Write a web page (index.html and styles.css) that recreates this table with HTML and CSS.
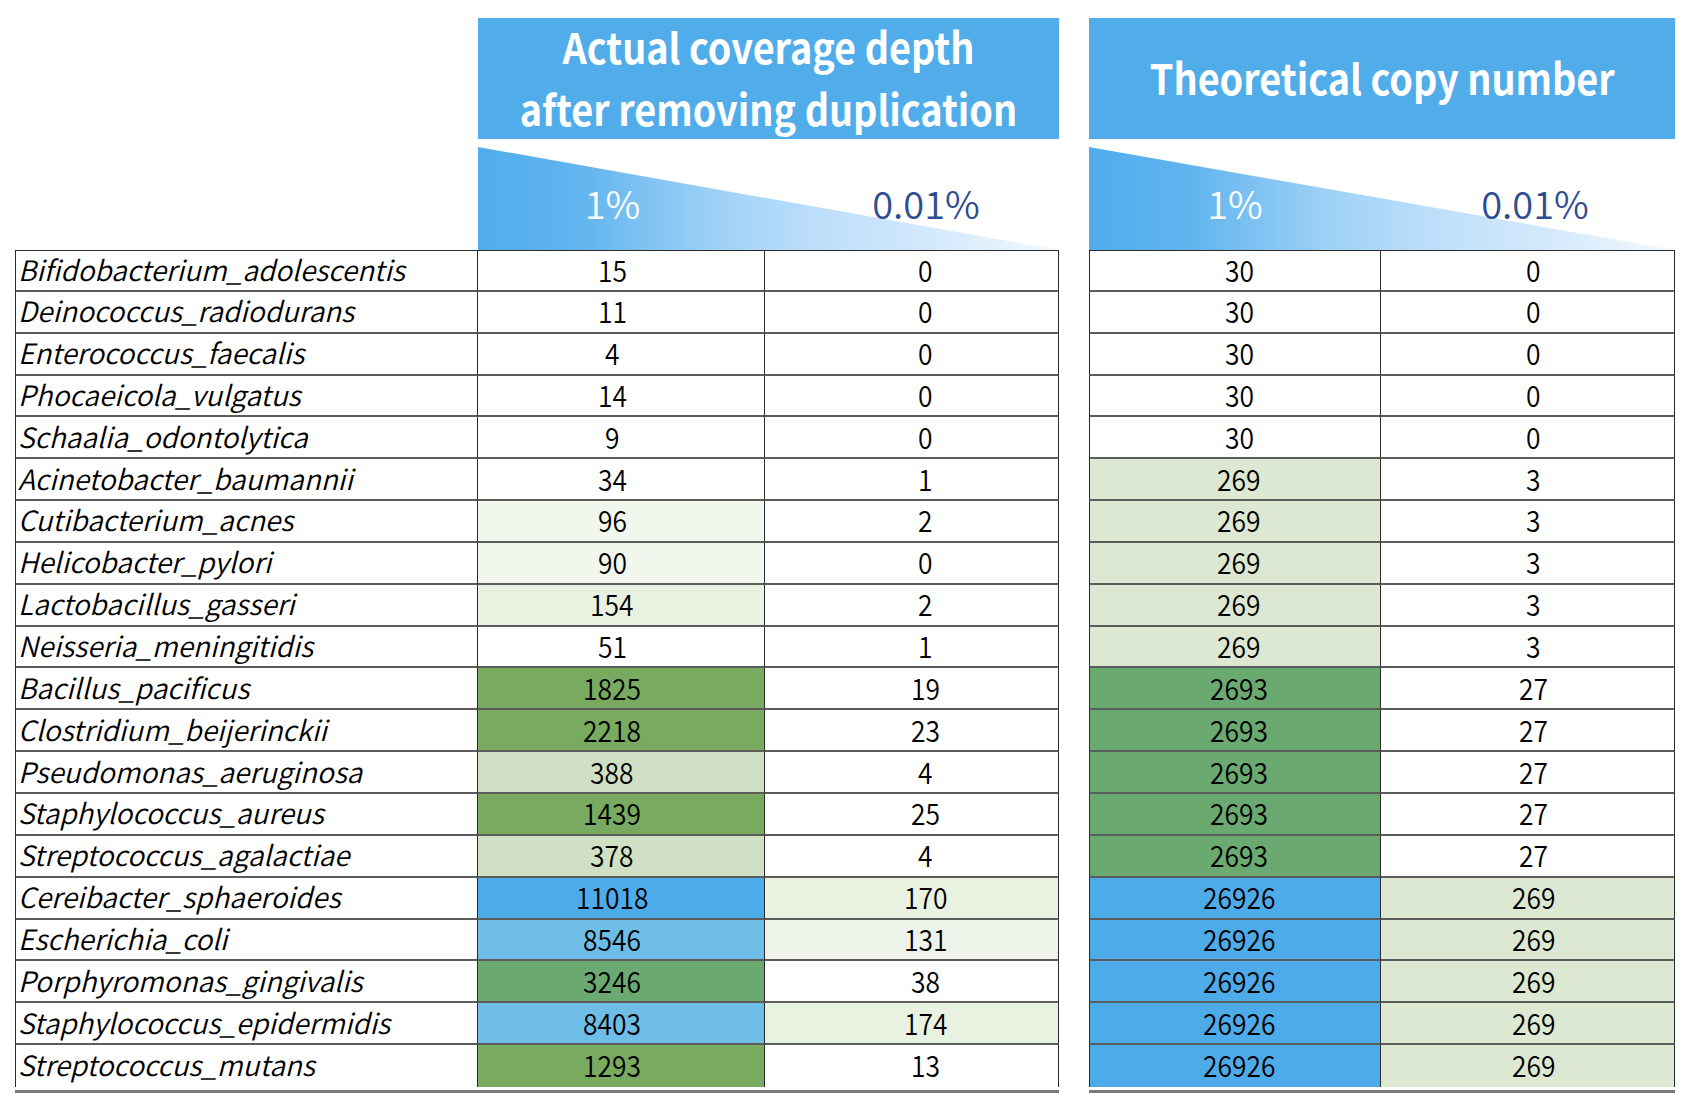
FILE: index.html
```html
<!DOCTYPE html>
<html>
<head>
<meta charset="utf-8">
<link rel="stylesheet" href="styles.css">
</head>
<body>
<div class="sheet">
  <div class="tbl tbl-left">
    <div class="head"><span class="ht">Actual coverage depth<br>after removing duplication</span></div>
    <div class="sub"><span class="p1">1%</span><span class="p2">0.01%</span></div>
    <div class="body">
      <div class="c name first top">Bifidobacterium_adolescentis</div><div class="c v1 top"><span>15</span></div><div class="c v2 top"><span>0</span></div>
      <div class="c name first">Deinococcus_radiodurans</div><div class="c v1"><span>11</span></div><div class="c v2"><span>0</span></div>
      <div class="c name first">Enterococcus_faecalis</div><div class="c v1"><span>4</span></div><div class="c v2"><span>0</span></div>
      <div class="c name first">Phocaeicola_vulgatus</div><div class="c v1"><span>14</span></div><div class="c v2"><span>0</span></div>
      <div class="c name first">Schaalia_odontolytica</div><div class="c v1"><span>9</span></div><div class="c v2"><span>0</span></div>
      <div class="c name first">Acinetobacter_baumannii</div><div class="c v1"><span>34</span></div><div class="c v2"><span>1</span></div>
      <div class="c name first">Cutibacterium_acnes</div><div class="c v1 g0"><span>96</span></div><div class="c v2"><span>2</span></div>
      <div class="c name first">Helicobacter_pylori</div><div class="c v1 g0"><span>90</span></div><div class="c v2"><span>0</span></div>
      <div class="c name first">Lactobacillus_gasseri</div><div class="c v1 g1"><span>154</span></div><div class="c v2"><span>2</span></div>
      <div class="c name first">Neisseria_meningitidis</div><div class="c v1"><span>51</span></div><div class="c v2"><span>1</span></div>
      <div class="c name first">Bacillus_pacificus</div><div class="c v1 gd"><span>1825</span></div><div class="c v2"><span>19</span></div>
      <div class="c name first">Clostridium_beijerinckii</div><div class="c v1 gd"><span>2218</span></div><div class="c v2"><span>23</span></div>
      <div class="c name first">Pseudomonas_aeruginosa</div><div class="c v1 g3"><span>388</span></div><div class="c v2"><span>4</span></div>
      <div class="c name first">Staphylococcus_aureus</div><div class="c v1 gd"><span>1439</span></div><div class="c v2"><span>25</span></div>
      <div class="c name first">Streptococcus_agalactiae</div><div class="c v1 g3"><span>378</span></div><div class="c v2"><span>4</span></div>
      <div class="c name first">Cereibacter_sphaeroides</div><div class="c v1 bl"><span>11018</span></div><div class="c v2 g1"><span>170</span></div>
      <div class="c name first">Escherichia_coli</div><div class="c v1 lb"><span>8546</span></div><div class="c v2 g0b"><span>131</span></div>
      <div class="c name first">Porphyromonas_gingivalis</div><div class="c v1 gm"><span>3246</span></div><div class="c v2"><span>38</span></div>
      <div class="c name first">Staphylococcus_epidermidis</div><div class="c v1 lb"><span>8403</span></div><div class="c v2 g1"><span>174</span></div>
      <div class="c name first last">Streptococcus_mutans</div><div class="c v1 gd last"><span>1293</span></div><div class="c v2 last"><span>13</span></div>
    </div>
    <div class="foot"></div>
  </div>

  <div class="tbl tbl-right">
    <div class="head"><span class="ht">Theoretical copy number</span></div>
    <div class="sub"><span class="p1">1%</span><span class="p2">0.01%</span></div>
    <div class="body">
      <div class="c v3 first top"><span>30</span></div><div class="c v4 top"><span>0</span></div>
      <div class="c v3 first"><span>30</span></div><div class="c v4"><span>0</span></div>
      <div class="c v3 first"><span>30</span></div><div class="c v4"><span>0</span></div>
      <div class="c v3 first"><span>30</span></div><div class="c v4"><span>0</span></div>
      <div class="c v3 first"><span>30</span></div><div class="c v4"><span>0</span></div>
      <div class="c v3 first g2"><span>269</span></div><div class="c v4"><span>3</span></div>
      <div class="c v3 first g2"><span>269</span></div><div class="c v4"><span>3</span></div>
      <div class="c v3 first g2"><span>269</span></div><div class="c v4"><span>3</span></div>
      <div class="c v3 first g2"><span>269</span></div><div class="c v4"><span>3</span></div>
      <div class="c v3 first g2"><span>269</span></div><div class="c v4"><span>3</span></div>
      <div class="c v3 first gm"><span>2693</span></div><div class="c v4"><span>27</span></div>
      <div class="c v3 first gm"><span>2693</span></div><div class="c v4"><span>27</span></div>
      <div class="c v3 first gm"><span>2693</span></div><div class="c v4"><span>27</span></div>
      <div class="c v3 first gm"><span>2693</span></div><div class="c v4"><span>27</span></div>
      <div class="c v3 first gm"><span>2693</span></div><div class="c v4"><span>27</span></div>
      <div class="c v3 first bl"><span>26926</span></div><div class="c v4 g2"><span>269</span></div>
      <div class="c v3 first bl"><span>26926</span></div><div class="c v4 g2"><span>269</span></div>
      <div class="c v3 first bl"><span>26926</span></div><div class="c v4 g2"><span>269</span></div>
      <div class="c v3 first bl"><span>26926</span></div><div class="c v4 g2"><span>269</span></div>
      <div class="c v3 first bl last"><span>26926</span></div><div class="c v4 g2 last"><span>269</span></div>
    </div>
    <div class="foot"></div>
  </div>
</div>
</body>
</html>
```
FILE: styles.css
```css
html, body {
  margin: 0;
  padding: 0;
  background: #ffffff;
}
body {
  font-family: "Noto Sans CJK SC", "Noto Sans", sans-serif;
  color: #000;
}
.sheet {
  display: flex;
  gap: 30px;
  padding: 18px 0 0 15px;
}
.tbl {
  display: flex;
  flex-direction: column;
}
.body {
  display: grid;
  grid-auto-rows: 41.85px;
}
.tbl-left .body {
  grid-template-columns: 463px 287px 294px;
}
.tbl-right .body {
  grid-template-columns: 292px 294px;
}
.tbl-left .head,
.tbl-left .sub {
  margin-left: 463px;
}

.head {
  box-sizing: border-box;
  height: 121px;
  padding-bottom: 4px;
  background: #51adea;
  color: #fff;
  font-weight: 700;
  font-size: 42px;
  line-height: 62px;
  text-align: center;
  display: flex;
  align-items: center;
  justify-content: center;
}
.ht {
  display: inline-block;
  white-space: nowrap;
  transform: scaleX(0.9);
}
.sub {
  height: 103px;
  margin-top: 8px;
  position: relative;
  display: grid;
  align-items: end;
  box-sizing: border-box;
  padding-bottom: 24px;
  font-size: 38px;
  font-weight: 350;
  line-height: 46px;
  text-align: center;
}
.tbl-left .sub { grid-template-columns: 287px 294px; }
.tbl-right .sub { grid-template-columns: 292px 294px; }
.sub::before {
  content: "";
  position: absolute;
  inset: 0;
  clip-path: polygon(0 0, 100% 100%, 0 100%);
  background: linear-gradient(90deg, #50acec 0%, #62b5ef 18%, #9dd0f6 40%, #bcdefa 58%, #d3e9fc 78%, #f3f9fe 100%);
}
.p1, .p2 { position: relative; }
.p1 { color: #ffffff; }
.p2 { color: #2e4d90; }
.tbl-left .p1 { margin-right: 18px; }
.tbl-left .p2 { margin-left: 28px; }
.tbl-right .p2 { margin-left: 14px; }

.c {
  box-sizing: border-box;
  border-right: 1px solid #2a2a2a;
  border-bottom: 2px solid #5c5c5c;
  padding-bottom: 3px;
  font-size: 30px;
  font-weight: 350;
  line-height: 1;
  display: flex;
  align-items: center;
  justify-content: center;
  white-space: nowrap;
}
.c > span {
  display: inline-block;
  transform: scaleX(0.88);
}
.v1 { padding-right: 18px; }
.v2 { padding-left: 28px; }
.v3 { padding-left: 8px; }
.v4 { padding-left: 12px; }
.c.top { border-top: 1px solid #2a2a2a; }
.c.first { border-left: 1px solid #2a2a2a; }
.c.last { border-bottom: none; }
.name {
  justify-content: flex-start;
  padding-left: 2px;
  font-size: 28px;
  font-style: italic;
}
.foot {
  height: 3px;
  margin-top: 3px;
  background: #7a7a7a;
}

.g0 { background: #f2f7ee; }
.g0b { background: #eef3e9; }
.g1 { background: #e9f1e1; }
.g2 { background: #dde8d2; }
.g3 { background: #cfe0c4; }
.gd { background: #78aa5f; }
.gm { background: #6aaa70; }
.bl { background: #4eabea; }
.lb { background: #6ebde6; }
```
